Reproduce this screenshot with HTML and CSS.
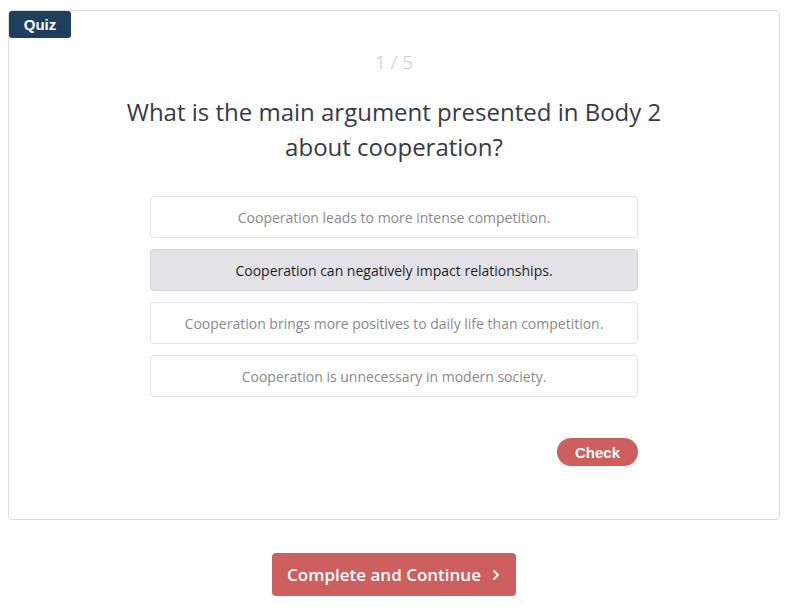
FILE: index.html
```html
<!DOCTYPE html>
<html>
<head>
    <title>Quiz</title>
    <link rel="stylesheet" href="styles.css">
</head>
<body>
    <div class="quiz-card">
        <span class="quiz-badge">Quiz</span>
        <div class="quiz-counter">1 / 5</div>
        <h2 class="quiz-question">What is the main argument presented in Body 2 about cooperation?</h2>

        <div class="options">
            <div class="option">Cooperation leads to more intense competition.</div>
            <div class="option selected">Cooperation can negatively impact relationships.</div>
            <div class="option">Cooperation brings more positives to daily life than competition.</div>
            <div class="option">Cooperation is unnecessary in modern society.</div>
        </div>

        <div class="actions">
            <button class="check-btn">Check</button>
        </div>
    </div>

    <div class="footer">
        <button class="continue-btn">
            Complete and Continue
            <svg class="chevron" width="10" height="12" viewBox="0 0 10 12" fill="none" stroke="currentColor" stroke-width="1.8" stroke-linecap="round" stroke-linejoin="round"><polyline points="3 2 7 6 3 10"></polyline></svg>
        </button>
    </div>
</body>
</html>
```

FILE: styles.css
```css
:root {
    --navy: #1f3f5e;
    --red: #cd5f5f;
    --border-color: #dcdcdc;
    --text-color: #363a46;
    --muted: #8a8a8a;
}

* {
    box-sizing: border-box;
    margin: 0;
    padding: 0;
}

body {
    font-family: 'Open Sans', Arial, sans-serif;
    margin: 0;
    padding: 10px 9px 0 8px;
    background-color: #ffffff;
    color: var(--text-color);
}

.quiz-card {
    position: relative;
    border: 1px solid var(--border-color);
    border-radius: 4px;
    height: 510px;
    padding: 38px 0 0;
}

.quiz-badge {
    position: absolute;
    top: 0;
    left: 0;
    width: 62px;
    height: 27px;
    background-color: var(--navy);
    color: white;
    font-family: 'Liberation Sans', Arial, sans-serif;
    font-weight: 700;
    font-size: 15px;
    line-height: 27px;
    text-align: center;
    border-radius: 3px;
}

.quiz-counter {
    text-align: center;
    color: #c4c4c4;
    font-size: 19px;
    line-height: 26px;
    font-weight: 300;
}

.quiz-question {
    margin: 19px auto 0;
    max-width: 560px;
    text-align: center;
    font-size: 24px;
    font-weight: 400;
    line-height: 35px;
    color: var(--text-color);
}

.options {
    width: 488px;
    margin: 32px auto 0;
    display: flex;
    flex-direction: column;
    gap: 11px;
}

.option {
    height: 42px;
    border: 1px solid #e4e4e4;
    border-radius: 4px;
    display: flex;
    align-items: center;
    justify-content: center;
    font-size: 14px;
    color: var(--muted);
    background-color: #ffffff;
}

.option.selected {
    background-color: #e2e2e7;
    border-color: #d2d2d8;
    color: #1e1e1e;
}

.actions {
    width: 488px;
    margin: 41px auto 0;
    display: flex;
    justify-content: flex-end;
}

.check-btn {
    width: 81px;
    height: 28px;
    border: none;
    border-radius: 14px;
    background-color: var(--red);
    color: white;
    font-family: 'Liberation Sans', Arial, sans-serif;
    font-weight: 700;
    font-size: 15px;
    cursor: pointer;
}

.footer {
    display: flex;
    justify-content: center;
    padding-top: 33px;
}

.continue-btn {
    width: 244px;
    height: 43px;
    border: none;
    border-radius: 4px;
    background-color: var(--red);
    color: white;
    font-family: 'Open Sans', Arial, sans-serif;
    font-weight: 600;
    font-size: 17px;
    display: flex;
    align-items: center;
    justify-content: center;
    gap: 10px;
    cursor: pointer;
}
```
